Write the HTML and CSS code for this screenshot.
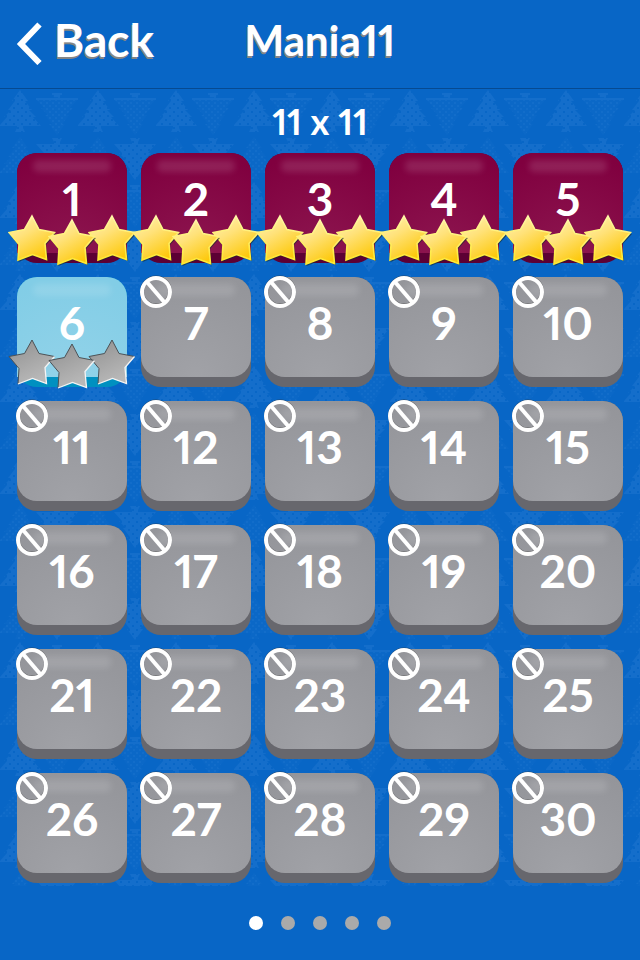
FILE: index.html
```html
<!DOCTYPE html>
<html lang="en">
<head>
  <meta charset="UTF-8">
  <meta name="viewport" content="width=device-width, initial-scale=1.0">
  <title>Mania11</title>
  <link rel="stylesheet" href="styles.css">
</head>
<body>

<!-- Shared shapes -->
<svg class="shapes" width="0" height="0" aria-hidden="true">
  <defs>
    <linearGradient id="gold" x1="0" y1="0" x2="0.6" y2="1">
      <stop offset="0" stop-color="#fff3b8"/>
      <stop offset="0.45" stop-color="#ffe27a"/>
      <stop offset="1" stop-color="#fdc90c"/>
    </linearGradient>
    <linearGradient id="gold-edge" x1="0" y1="0" x2="0" y2="1">
      <stop offset="0" stop-color="#fff6a8"/>
      <stop offset="1" stop-color="#ffe92e"/>
    </linearGradient>
    <linearGradient id="silver" x1="0" y1="0" x2="0.5" y2="1">
      <stop offset="0" stop-color="#8f8f8f"/>
      <stop offset="1" stop-color="#b9b9b9"/>
    </linearGradient>
    <symbol id="star-gold" viewBox="0 0 48 48">
      <path d="M25 3 L33 17 L48 20 L38 31 L40 47 L25.500 42 L10.500 48 L11 32 L1.500 20 L17 17.500 Z" fill="#16282e" opacity="0.6"/>
      <path d="M24 2 L31 15.500 L46.500 18.500 L37 29.500 L38.500 45.500 L24.500 40.500 L10 46 L11 30.500 L1 18.500 L16.500 15.500 Z" fill="url(#gold)" stroke="url(#gold-edge)" stroke-width="1.600"/>
    </symbol>
    <symbol id="star-gray" viewBox="0 0 48 48">
      <path d="M24 2 L31 15.500 L46.500 18.500 L37 29.500 L38.500 45.500 L24.500 40.500 L10 46 L11 30.500 L1 18.500 L16.500 15.500 Z" fill="url(#silver)"/>
      <path d="M10 46 L11 30.500 L1 18.500 L16.500 15.500 L24 2 L31 15.500 L46.500 18.500" fill="none" stroke="#4c5256" stroke-width="1"/>
      <path d="M46.500 18.500 L37 29.500 L38.500 45.500 L24.500 40.500 L10 46" fill="none" stroke="#f4f4f4" stroke-width="1.300"/>
    </symbol>
    <symbol id="locked" viewBox="0 0 34 34">
      <circle cx="17" cy="16.500" r="14" fill="none" stroke="#333" stroke-width="4" opacity="0.6"/>
      <circle cx="17" cy="17" r="14" fill="none" stroke="#fff" stroke-width="4"/>
      <path d="M8 7 L26 28" stroke="#fff" stroke-width="4"/>
    </symbol>
  </defs>
</svg>

<header class="header">
  <button class="back" type="button">
    <svg class="back-icon" width="26" height="44" viewBox="0 0 26 44" aria-hidden="true">
      <path d="M23.500 3.500 L5 23 L23.500 42" fill="none" stroke="#fff" stroke-width="6"/>
    </svg>
    Back
  </button>
  <h1 class="title">Mania11</h1>
</header>

<main class="levels">
  <!-- Tree wallpaper -->
  <svg class="wallpaper" width="100%" height="100%" aria-hidden="true">
    <defs>
      <pattern id="holes" width="8" height="8" patternUnits="userSpaceOnUse">
        <rect width="8" height="8" fill="#146ecb"/>
        <rect x="1" y="1" width="2" height="2" fill="#0866c6"/>
        <rect x="5" y="5" width="2" height="2" fill="#0866c6"/>
      </pattern>
      <pattern id="specks" width="6" height="6" patternUnits="userSpaceOnUse">
        <rect width="6" height="6" fill="#0b68c7"/>
        <rect x="1" y="1" width="2" height="2" fill="#126dca"/>
        <rect x="4" y="4" width="2" height="2" fill="#126dca"/>
      </pattern>
      <path id="tree" d="M0 0 L8 11 H5 L12 20 H9 L16 27 H13 L21 36 H3 V38 L5 42 H-5 L-3 38 V36 H-21 L-13 27 H-16 L-9 20 H-12 L-5 11 H-8 Z"/>
      <pattern id="trees" width="78" height="92" patternUnits="userSpaceOnUse">
        <use href="#tree" x="20" y="1" fill="url(#holes)"/>
        <g transform="translate(57 46) scale(1 -1)">
          <use href="#tree" fill="url(#specks)"/>
          <path d="M-21 36 H21 M-5 41 H5 M-3 39 H3" stroke="#146ecb" stroke-width="2"/>
        </g>
        <use href="#tree" x="20" y="48" fill="url(#specks)"/>
        <use href="#tree" transform="translate(57 91) scale(1 -1)" fill="url(#holes)"/>
      </pattern>
    </defs>
    <rect width="100%" height="100%" fill="url(#trees)"/>
  </svg>

  <h2 class="size">11 x 11</h2>
  <div class="grid" id="grid"></div>
</main>

<nav class="pages" aria-label="Level pages">
  <button class="dot active" type="button" aria-label="Page 1"></button>
  <button class="dot" type="button" aria-label="Page 2"></button>
  <button class="dot" type="button" aria-label="Page 3"></button>
  <button class="dot" type="button" aria-label="Page 4"></button>
  <button class="dot" type="button" aria-label="Page 5"></button>
</nav>

<script>
  var currentLevel = 6;
  var grid = document.getElementById("grid");

  function stars(kind) {
    // middle star goes last so its tips lie over the outer two
    return '<svg class="stars" width="128" height="52" viewBox="0 0 128 52" aria-hidden="true">' +
      '<use href="#star-' + kind + '" x="0" y="0" width="48" height="48"/>' +
      '<use href="#star-' + kind + '" x="80" y="0" width="48" height="48"/>' +
      '<use href="#star-' + kind + '" x="40" y="4" width="48" height="48"/>' +
      '</svg>';
  }

  for (var i = 1; i <= 30; i++) {
    var button = document.createElement("button");
    var extra = "";
    button.type = "button";

    if (i < currentLevel) {
      button.className = "level done";
      extra = stars("gold");
    } else if (i === currentLevel) {
      button.className = "level current";
      extra = stars("gray");
    } else {
      button.className = "level locked";
      extra = '<svg class="lock" width="34" height="34" aria-hidden="true"><use href="#locked"/></svg>';
    }

    button.innerHTML = '<span class="face">' + i + '</span>' + extra;
    grid.appendChild(button);
  }
</script>

</body>
</html>
```

FILE: styles.css
```css
* {
  box-sizing: border-box;
}

body {
  margin: 0;
  min-height: 100vh;
  display: flex;
  flex-direction: column;
  background-color: #0866c6;
  color: #fff;
  font-family: Lato, "Open Sans", sans-serif;
  font-weight: bold;
  font-variant-numeric: proportional-nums;
}

button {
  padding: 0;
  border: 0;
  background: none;
  color: inherit;
  font: inherit;
  font-variant-numeric: inherit;
  cursor: pointer;
}

.shapes {
  position: absolute;
}

.header {
  display: grid;
  grid-template-columns: 1fr auto 1fr;
  height: 89px;
  padding: 12px 16px 0;
  align-items: start;
  border-bottom: 1px solid #064a91;
  text-shadow: -1px 2px 0 #858585;
}

.back {
  display: flex;
  align-items: center;
  gap: 12px;
  font-size: 46px;
  line-height: 56px;
  text-shadow: inherit;
}

.back-icon {
  margin-top: 6px;
}

.title {
  margin: 0;
  font-size: 42px;
  line-height: 56px;
}

.levels {
  position: relative;
  padding: 4px 17px 3px;
}

.wallpaper {
  position: absolute;
  top: 0;
  left: 0;
}

.size {
  position: relative;
  margin: 0 0 4px;
  font-size: 36px;
  line-height: 56px;
  text-align: center;
}

.grid {
  position: relative;
  display: grid;
  grid-template-columns: repeat(5, 1fr);
  gap: 14px;
}

.level {
  position: relative;
  display: flex;
  align-items: flex-start;
  height: 110px;
  border-radius: 20px;
  font-size: 46px;
}

.face {
  position: relative;
  flex: 1;
  height: 100px;
  border-radius: 20px;
  line-height: 92px;
}

/* soft shine along the top edge */
.face::before {
  content: "";
  position: absolute;
  top: 7px;
  left: 16px;
  right: 16px;
  height: 12px;
  border-radius: 5px;
  background-color: rgba(255, 255, 255, 0.12);
  filter: blur(3px);
}

.done {
  background-color: #5c0034;
}

.done .face {
  border-radius: 20px 20px 0 0;
  background: radial-gradient(circle at 50% 110%, #8e1851, #80003f 90%);
}

.current {
  background-color: #0090c0;
}

.current .face {
  border-radius: 20px 20px 0 0;
  background: radial-gradient(circle at 50% 110%, #93d3e9, #82cde6 90%);
}

.locked {
  background-color: #67676d;
}

.locked .face {
  background: radial-gradient(circle at 50% 100%, #a1a2a7, #939499 100%);
}

.stars {
  position: absolute;
  z-index: 1;
  left: -9px;
  bottom: -3px;
}

.lock {
  position: absolute;
  top: -2px;
  left: -2px;
}

.pages {
  display: flex;
  flex: 1;
  align-items: center;
  justify-content: center;
  gap: 18px;
}

.dot {
  width: 14px;
  height: 14px;
  border-radius: 50%;
  background-color: #aaa;
}

.dot.active {
  background-color: #fff;
}
```
